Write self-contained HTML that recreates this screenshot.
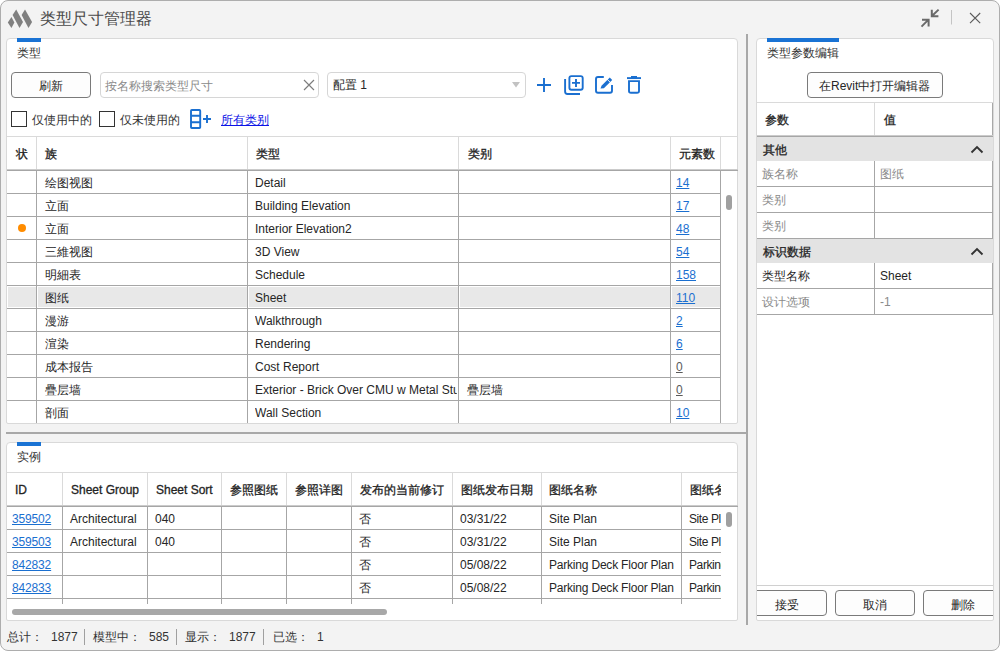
<!DOCTYPE html>
<html><head><meta charset="utf-8"><style>
*{box-sizing:border-box;margin:0;padding:0}
html,body{width:1000px;height:651px;overflow:hidden;background:#ffffff}
body{font-family:"Liberation Sans",sans-serif;font-size:12px;color:#262626;position:relative}
.a{position:absolute}
.t{position:absolute;white-space:nowrap;line-height:14px}
.sb{-webkit-text-stroke:0.3px #1f1f1f}
.lk{color:#1a6fd0;text-decoration:underline;text-underline-offset:1px}
.lg{color:#5a5a5a;text-decoration:underline;text-underline-offset:1px}
.gr{color:#808080}
</style></head><body>
<div class="a" style="left:0;top:0;width:1000px;height:651px;border:1px solid #adadad;border-radius:8px;background:#f3f3f3;overflow:hidden">
</div>
<svg class="a" style="left:0;top:0" width="40" height="36" viewBox="0 0 40 36"><g fill="#808080"><polygon points="7.8,22.5 11.45,16.9 14.4,22.5 11.45,28.1"/><polygon points="16.2,9.6 23,22 19.5,28.1 12.6,15.1"/><polygon points="25,9.6 32.1,22 28.5,28.1 21.6,15.1"/></g></svg>
<div class="t" style="left:40px;top:9px;font-size:16px;line-height:20px;color:#4a4a4a">类型尺寸管理器</div>
<svg class="a" style="left:900px;top:0" width="100" height="36" viewBox="900 0 100 36"><g stroke="#6a6a6a" stroke-width="2" fill="none"><path d="M922,19.8 H928.6 V26.4 M921.5,26.6 L928.2,19.9"/><path d="M931.8,9.8 V16.2 H938.4 M932.2,15.8 L938.6,9.6"/></g><line x1="951.5" y1="10" x2="951.5" y2="24.5" stroke="#c4c4c4" stroke-width="1"/><path d="M970,13 L980.2,23.2 M980.2,13 L970,23.2" stroke="#5a5a5a" stroke-width="1.1" fill="none"/></svg>
<div class="a" style="left:6px;top:38px;width:732px;height:386px;background:#fff;border:1px solid #d9d9d9;border-radius:4px 4px 2px 2px"></div>
<div class="a" style="left:17px;top:38px;width:24px;height:4px;background:#1a73d4"></div>
<div class="t" style="left:17px;top:46px;color:#333">类型</div>
<div class="a" style="left:11px;top:72px;width:80px;height:26px;background:#fdfdfd;border:1px solid #7a7a7a;border-radius:4px"></div>
<div class="t" style="left:39px;top:79px;">刷新</div>
<div class="a" style="left:100px;top:72px;width:219px;height:26px;background:#fff;border:1px solid #d6d6d6;border-radius:4px"></div>
<div class="t" style="left:105px;top:79px;color:#8a8a8a">按名称搜索类型尺寸</div>
<svg class="a" style="left:300px;top:76px" width="18" height="18" viewBox="300 76 18 18"><path d="M304,80 L314,90 M314,80 L304,90" stroke="#7c7c7c" stroke-width="1.15"/></svg>
<div class="a" style="left:327px;top:72px;width:199px;height:26px;background:#fff;border:1px solid #d6d6d6;border-radius:4px"></div>
<div class="t" style="left:333px;top:78px;">配置 1</div>
<svg class="a" style="left:510px;top:80px" width="12" height="10" viewBox="510 80 12 10"><polygon points="512,82 520,82 516,87.5" fill="#c2c2c2"/></svg>
<svg class="a" style="left:530px;top:70px" width="120" height="30" viewBox="530 70 120 30"><g stroke="#1a6fd0" stroke-width="1.9" fill="none"><path d="M537,85 H551 M544,78 V92"/><path d="M565.1,79 V91.5 Q565.1,94 567.5,94 H580"/><rect x="569.4" y="76.1" width="13.3" height="13.6" rx="2"/><path d="M572,82.9 H580 M576,79 V87"/><path d="M603.8,77 H598 Q596,77 596,79 V90.8 Q596,92.8 598,92.8 H610 Q612,92.8 612,90.8 V85"/><path d="M627,78.1 H641"/><path d="M629,81.1 H639 V91 Q639,92.8 637,92.8 H631 Q629,92.8 629,91 Z"/></g><path d="M600.5,88.6 L601.5,85.8 L609.8,77.5 L612.2,79.9 L603.9,88.2 Z" fill="#1a6fd0"/><rect x="631" y="76" width="6" height="2" fill="#1a6fd0"/><path d="M607.2,79.3 L610.3,82.4" stroke="#fff" stroke-width="0.9"/></svg>
<div class="a" style="left:11px;top:111px;width:16px;height:16px;border:1.4px solid #333;background:#fff"></div>
<div class="t" style="left:32px;top:113px;color:#333">仅使用中的</div>
<div class="a" style="left:99px;top:111px;width:16px;height:16px;border:1.4px solid #333;background:#fff"></div>
<div class="t" style="left:120px;top:113px;color:#333">仅未使用的</div>
<svg class="a" style="left:185px;top:105px" width="30" height="30" viewBox="185 105 30 30"><g stroke="#1a6fd0" stroke-width="1.9" fill="none"><rect x="191" y="110" width="9.2" height="18" rx="0.8"/><path d="M191,115.8 H200 M191,122.2 H200"/><path d="M203,119 H211 M207,115 V123"/></g></svg>
<div class="t" style="left:221px;top:113px;color:#0b12e6;text-decoration:underline;text-underline-offset:1px">所有类别</div>
<div class="a" style="left:7px;top:136px;width:731px;height:1px;background:#dadada"></div>
<div class="a" style="left:7px;top:169px;width:731px;height:1px;background:#cbcbcb"></div>
<div class="a" style="left:7px;top:170px;width:731px;height:1px;background:#a6a6a6"></div>
<div class="a" style="left:36px;top:137px;width:1px;height:32px;background:#dadada"></div>
<div class="a" style="left:247px;top:137px;width:1px;height:32px;background:#dadada"></div>
<div class="a" style="left:458px;top:137px;width:1px;height:32px;background:#dadada"></div>
<div class="a" style="left:670px;top:137px;width:1px;height:32px;background:#dadada"></div>
<div class="a" style="left:720px;top:137px;width:1px;height:32px;background:#dadada"></div>
<div class="t sb" style="left:16px;top:147px;">状</div>
<div class="t sb" style="left:45px;top:147px;">族</div>
<div class="t sb" style="left:256px;top:147px;">类型</div>
<div class="t sb" style="left:468px;top:147px;">类别</div>
<div class="t sb" style="left:679px;top:147px;">元素数</div>
<div class="t" style="left:45px;top:176px;">绘图视图</div>
<div class="t" style="left:255px;top:176px;width:202px;overflow:hidden">Detail</div>
<div class="t lk" style="left:676px;top:176px;">14</div>
<div class="a" style="left:7px;top:193px;width:714px;height:1px;background:#a6a6a6"></div>
<div class="t" style="left:45px;top:199px;">立面</div>
<div class="t" style="left:255px;top:199px;width:202px;overflow:hidden">Building Elevation</div>
<div class="t lk" style="left:676px;top:199px;">17</div>
<div class="a" style="left:7px;top:216px;width:714px;height:1px;background:#a6a6a6"></div>
<div class="a" style="left:18px;top:224px;width:8px;height:8px;background:#ff8c00;border-radius:50%"></div>
<div class="t" style="left:45px;top:222px;">立面</div>
<div class="t" style="left:255px;top:222px;width:202px;overflow:hidden">Interior Elevation2</div>
<div class="t lk" style="left:676px;top:222px;">48</div>
<div class="a" style="left:7px;top:239px;width:714px;height:1px;background:#a6a6a6"></div>
<div class="t" style="left:45px;top:245px;">三維视图</div>
<div class="t" style="left:255px;top:245px;width:202px;overflow:hidden">3D View</div>
<div class="t lk" style="left:676px;top:245px;">54</div>
<div class="a" style="left:7px;top:262px;width:714px;height:1px;background:#a6a6a6"></div>
<div class="t" style="left:45px;top:268px;">明細表</div>
<div class="t" style="left:255px;top:268px;width:202px;overflow:hidden">Schedule</div>
<div class="t lk" style="left:676px;top:268px;">158</div>
<div class="a" style="left:7px;top:285px;width:714px;height:1px;background:#a6a6a6"></div>
<div class="a" style="left:8px;top:287px;width:28px;height:20px;background:#e8e8e8"></div>
<div class="a" style="left:38px;top:287px;width:209px;height:20px;background:#e8e8e8"></div>
<div class="a" style="left:249px;top:287px;width:209px;height:20px;background:#e8e8e8"></div>
<div class="a" style="left:460px;top:287px;width:210px;height:20px;background:#e8e8e8"></div>
<div class="a" style="left:672px;top:287px;width:48px;height:20px;background:#e8e8e8"></div>
<div class="t" style="left:45px;top:291px;">图纸</div>
<div class="t" style="left:255px;top:291px;width:202px;overflow:hidden">Sheet</div>
<div class="t lk" style="left:676px;top:291px;">110</div>
<div class="a" style="left:7px;top:308px;width:714px;height:1px;background:#a6a6a6"></div>
<div class="t" style="left:45px;top:314px;">漫游</div>
<div class="t" style="left:255px;top:314px;width:202px;overflow:hidden">Walkthrough</div>
<div class="t lk" style="left:676px;top:314px;">2</div>
<div class="a" style="left:7px;top:331px;width:714px;height:1px;background:#a6a6a6"></div>
<div class="t" style="left:45px;top:337px;">渲染</div>
<div class="t" style="left:255px;top:337px;width:202px;overflow:hidden">Rendering</div>
<div class="t lk" style="left:676px;top:337px;">6</div>
<div class="a" style="left:7px;top:354px;width:714px;height:1px;background:#a6a6a6"></div>
<div class="t" style="left:45px;top:360px;">成本报告</div>
<div class="t" style="left:255px;top:360px;width:202px;overflow:hidden">Cost Report</div>
<div class="t lg" style="left:676px;top:360px;">0</div>
<div class="a" style="left:7px;top:377px;width:714px;height:1px;background:#a6a6a6"></div>
<div class="t" style="left:45px;top:383px;">疊层墙</div>
<div class="t" style="left:255px;top:383px;width:202px;overflow:hidden">Exterior - Brick Over CMU w Metal Stud</div>
<div class="t" style="left:467px;top:383px;">疊层墙</div>
<div class="t lg" style="left:676px;top:383px;">0</div>
<div class="a" style="left:7px;top:400px;width:714px;height:1px;background:#a6a6a6"></div>
<div class="t" style="left:45px;top:406px;">剖面</div>
<div class="t" style="left:255px;top:406px;width:202px;overflow:hidden">Wall Section</div>
<div class="t lk" style="left:676px;top:406px;">10</div>
<div class="a" style="left:36px;top:171px;width:1px;height:252px;background:#a6a6a6"></div>
<div class="a" style="left:247px;top:171px;width:1px;height:252px;background:#a6a6a6"></div>
<div class="a" style="left:458px;top:171px;width:1px;height:252px;background:#a6a6a6"></div>
<div class="a" style="left:670px;top:171px;width:1px;height:252px;background:#a6a6a6"></div>
<div class="a" style="left:720px;top:171px;width:1px;height:252px;background:#a6a6a6"></div>
<div class="a" style="left:726px;top:195px;width:6px;height:15px;background:#a0a0a0;border-radius:3px"></div>
<div class="a" style="left:6px;top:432px;width:742px;height:2px;background:#a8a8a8"></div>
<div class="a" style="left:746px;top:34px;width:2px;height:591px;background:#a8a8a8"></div>
<div class="a" style="left:6px;top:442px;width:732px;height:179px;background:#fff;border:1px solid #d9d9d9;border-radius:4px 4px 2px 2px"></div>
<div class="a" style="left:17px;top:442px;width:24px;height:4px;background:#1a73d4"></div>
<div class="t" style="left:17px;top:450px;color:#333">实例</div>
<div class="a" style="left:7px;top:472px;width:731px;height:1px;background:#dadada"></div>
<div class="a" style="left:7px;top:505px;width:731px;height:1px;background:#cbcbcb"></div>
<div class="a" style="left:7px;top:506px;width:731px;height:1px;background:#a6a6a6"></div>
<div class="a" style="left:62px;top:473px;width:1px;height:32px;background:#dadada"></div>
<div class="a" style="left:147px;top:473px;width:1px;height:32px;background:#dadada"></div>
<div class="a" style="left:221px;top:473px;width:1px;height:32px;background:#dadada"></div>
<div class="a" style="left:286px;top:473px;width:1px;height:32px;background:#dadada"></div>
<div class="a" style="left:351px;top:473px;width:1px;height:32px;background:#dadada"></div>
<div class="a" style="left:452px;top:473px;width:1px;height:32px;background:#dadada"></div>
<div class="a" style="left:541px;top:473px;width:1px;height:32px;background:#dadada"></div>
<div class="a" style="left:681px;top:473px;width:1px;height:32px;background:#dadada"></div>
<div class="a" style="left:7px;top:473px;width:714px;height:32px;overflow:hidden">
<div class="t sb" style="left:8px;top:10px;">ID</div>
<div class="t sb" style="left:64px;top:10px;">Sheet Group</div>
<div class="t sb" style="left:149px;top:10px;">Sheet Sort</div>
<div class="t sb" style="left:223px;top:10px;">参照图纸</div>
<div class="t sb" style="left:288px;top:10px;">参照详图</div>
<div class="t sb" style="left:353px;top:10px;">发布的当前修订</div>
<div class="t sb" style="left:454px;top:10px;">图纸发布日期</div>
<div class="t sb" style="left:542px;top:10px;">图纸名称</div>
<div class="t sb" style="left:683px;top:10px;">图纸名称</div>
</div>
<div class="a" style="left:7px;top:507px;width:714px;height:97px;overflow:hidden">
<div class="t lk" style="left:5px;top:5px;letter-spacing:-0.15px">359502</div>
<div class="t" style="left:63px;top:5px;">Architectural</div>
<div class="t" style="left:148px;top:5px;">040</div>
<div class="t" style="left:352px;top:5px;">否</div>
<div class="t" style="left:453px;top:5px;">03/31/22</div>
<div class="t" style="left:542px;top:5px;">Site Plan</div>
<div class="t" style="left:682px;top:5px;letter-spacing:-0.4px">Site Plan</div>
<div class="a" style="left:0px;top:22px;width:714px;height:1px;background:#a6a6a6"></div>
<div class="t lk" style="left:5px;top:28px;letter-spacing:-0.15px">359503</div>
<div class="t" style="left:63px;top:28px;">Architectural</div>
<div class="t" style="left:148px;top:28px;">040</div>
<div class="t" style="left:352px;top:28px;">否</div>
<div class="t" style="left:453px;top:28px;">03/31/22</div>
<div class="t" style="left:542px;top:28px;">Site Plan</div>
<div class="t" style="left:682px;top:28px;letter-spacing:-0.4px">Site Plan</div>
<div class="a" style="left:0px;top:45px;width:714px;height:1px;background:#a6a6a6"></div>
<div class="t lk" style="left:5px;top:51px;letter-spacing:-0.15px">842832</div>
<div class="t" style="left:352px;top:51px;">否</div>
<div class="t" style="left:453px;top:51px;">05/08/22</div>
<div class="t" style="left:542px;top:51px;letter-spacing:-0.2px">Parking Deck Floor Plan</div>
<div class="t" style="left:682px;top:51px;letter-spacing:-0.4px">Parking Deck Floor Plan</div>
<div class="a" style="left:0px;top:68px;width:714px;height:1px;background:#a6a6a6"></div>
<div class="t lk" style="left:5px;top:74px;letter-spacing:-0.15px">842833</div>
<div class="t" style="left:352px;top:74px;">否</div>
<div class="t" style="left:453px;top:74px;">05/08/22</div>
<div class="t" style="left:542px;top:74px;letter-spacing:-0.2px">Parking Deck Floor Plan</div>
<div class="t" style="left:682px;top:74px;letter-spacing:-0.4px">Parking Deck Floor Plan</div>
<div class="a" style="left:0px;top:91px;width:714px;height:1px;background:#a6a6a6"></div>
<div class="a" style="left:55px;top:0px;width:1px;height:97px;background:#a6a6a6"></div>
<div class="a" style="left:140px;top:0px;width:1px;height:97px;background:#a6a6a6"></div>
<div class="a" style="left:214px;top:0px;width:1px;height:97px;background:#a6a6a6"></div>
<div class="a" style="left:279px;top:0px;width:1px;height:97px;background:#a6a6a6"></div>
<div class="a" style="left:344px;top:0px;width:1px;height:97px;background:#a6a6a6"></div>
<div class="a" style="left:445px;top:0px;width:1px;height:97px;background:#a6a6a6"></div>
<div class="a" style="left:534px;top:0px;width:1px;height:97px;background:#a6a6a6"></div>
<div class="a" style="left:674px;top:0px;width:1px;height:97px;background:#a6a6a6"></div>
</div>
<div class="a" style="left:726px;top:512px;width:6px;height:15px;background:#a0a0a0;border-radius:3px"></div>
<div class="a" style="left:12px;top:609px;width:375px;height:6px;background:#a8a8a8;border-radius:3px"></div>
<div class="t" style="left:7px;top:630px;color:#333">总计：</div>
<div class="t" style="left:51px;top:630px;color:#333">1877</div>
<div class="a" style="left:84px;top:629px;width:1px;height:16px;background:#a0a0a0"></div>
<div class="t" style="left:93px;top:630px;color:#333">模型中：</div>
<div class="t" style="left:149px;top:630px;color:#333">585</div>
<div class="a" style="left:176px;top:629px;width:1px;height:16px;background:#a0a0a0"></div>
<div class="t" style="left:185px;top:630px;color:#333">显示：</div>
<div class="t" style="left:229px;top:630px;color:#333">1877</div>
<div class="a" style="left:263px;top:629px;width:1px;height:16px;background:#a0a0a0"></div>
<div class="t" style="left:273px;top:630px;color:#333">已选：</div>
<div class="t" style="left:317px;top:630px;color:#333">1</div>
<div class="a" style="left:756px;top:38px;width:238px;height:583px;background:#fff;border:1px solid #d9d9d9;border-radius:4px 4px 2px 2px"></div>
<div class="a" style="left:767px;top:38px;width:72px;height:4px;background:#1a73d4"></div>
<div class="t" style="left:767px;top:46px;color:#333">类型参数编辑</div>
<div class="a" style="left:807px;top:72px;width:136px;height:26px;background:#fdfdfd;border:1px solid #7a7a7a;border-radius:4px"></div>
<div class="t" style="left:819px;top:79px;">在Revit中打开编辑器</div>
<div class="a" style="left:757px;top:103px;width:236px;height:212px;border-right:1px solid #a8a8a8"></div>
<div class="a" style="left:757px;top:102px;width:236px;height:1px;background:#dadada"></div>
<div class="a" style="left:874px;top:103px;width:1px;height:32px;background:#dadada"></div>
<div class="t sb" style="left:765px;top:113px;">参数</div>
<div class="t sb" style="left:884px;top:113px;">值</div>
<div class="a" style="left:757px;top:135px;width:236px;height:1px;background:#cbcbcb"></div>
<div class="a" style="left:757px;top:136px;width:236px;height:1px;background:#a6a6a6"></div>
<div class="a" style="left:757px;top:137px;width:236px;height:24px;background:#e3e3e3"></div>
<div class="t sb" style="left:763px;top:143px;">其他</div>
<svg class="a" style="left:968px;top:137px" width="20" height="24" viewBox="0 0 20 24"><path d="M3.5,15.5 L9,10 L14.5,15.5" stroke="#333" stroke-width="1.9" fill="none"/></svg>
<div class="t" style="left:762px;top:167px;color:#8a8a8a">族名称</div>
<div class="t" style="left:880px;top:167px;color:#8a8a8a">图纸</div>
<div class="a" style="left:874px;top:161px;width:1px;height:25px;background:#a6a6a6"></div>
<div class="a" style="left:757px;top:186px;width:236px;height:1px;background:#a6a6a6"></div>
<div class="t" style="left:762px;top:193px;color:#8a8a8a">类别</div>
<div class="a" style="left:874px;top:187px;width:1px;height:25px;background:#a6a6a6"></div>
<div class="a" style="left:757px;top:212px;width:236px;height:1px;background:#a6a6a6"></div>
<div class="t" style="left:762px;top:219px;color:#8a8a8a">类别</div>
<div class="a" style="left:874px;top:213px;width:1px;height:25px;background:#a6a6a6"></div>
<div class="a" style="left:757px;top:238px;width:236px;height:1px;background:#a6a6a6"></div>
<div class="a" style="left:757px;top:239px;width:236px;height:24px;background:#e3e3e3"></div>
<div class="t sb" style="left:763px;top:245px;">标识数据</div>
<svg class="a" style="left:968px;top:239px" width="20" height="24" viewBox="0 0 20 24"><path d="M3.5,15.5 L9,10 L14.5,15.5" stroke="#333" stroke-width="1.9" fill="none"/></svg>
<div class="t" style="left:762px;top:269px;color:#1f1f1f">类型名称</div>
<div class="t" style="left:880px;top:269px;color:#1f1f1f">Sheet</div>
<div class="a" style="left:874px;top:263px;width:1px;height:25px;background:#a6a6a6"></div>
<div class="a" style="left:757px;top:288px;width:236px;height:1px;background:#a6a6a6"></div>
<div class="t" style="left:762px;top:295px;color:#8a8a8a">设计选项</div>
<div class="t" style="left:880px;top:295px;color:#8a8a8a">-1</div>
<div class="a" style="left:874px;top:289px;width:1px;height:25px;background:#a6a6a6"></div>
<div class="a" style="left:757px;top:314px;width:236px;height:1px;background:#a6a6a6"></div>
<div class="a" style="left:757px;top:585px;width:236px;height:1px;background:#d0d0d0"></div>
<div class="a" style="left:757px;top:586px;width:236px;height:34px;overflow:hidden">
<div class="a" style="left:-10px;top:4px;width:80px;height:26px;background:#fdfdfd;border:1px solid #7a7a7a;border-radius:4px"></div>
<div class="a" style="left:78px;top:4px;width:80px;height:26px;background:#fdfdfd;border:1px solid #7a7a7a;border-radius:4px"></div>
<div class="a" style="left:166px;top:4px;width:80px;height:26px;background:#fdfdfd;border:1px solid #7a7a7a;border-radius:4px"></div>
<div class="t" style="left:18px;top:12px">接受</div>
<div class="t" style="left:106px;top:12px">取消</div>
<div class="t" style="left:194px;top:12px">删除</div>
</div>
</body></html>
